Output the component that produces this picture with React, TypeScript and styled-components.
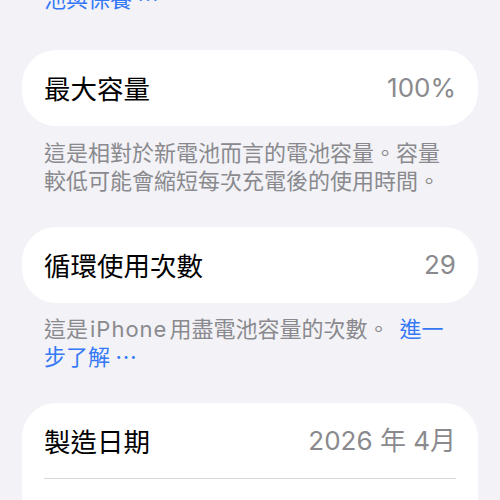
import React from "react";
import styled, { createGlobalStyle } from "styled-components";

const GlobalStyle = createGlobalStyle`
  html, body {
    margin: 0;
    padding: 0;
    background: #f2f2f7;
    overflow: hidden;
  }
  * { box-sizing: border-box; }
`;

const Page = styled.div`
  width: 500px;
  height: 500px;
  overflow: hidden;
  padding: 0 22px;
  background: #f2f2f7;
  font-family: Inter, "Noto Sans CJK TC", sans-serif;
  -webkit-font-smoothing: antialiased;
`;

const Footnote = styled.div<{ $top?: number }>`
  padding: ${(p) => p.$top ?? 13}px 22px 0;
  margin-bottom: 32px;
  font-family: Inter, "Noto Sans CJK TC", sans-serif;
  font-size: 22px;
  line-height: 28px;
  color: #8a8a8e;
  white-space: nowrap;
`;

const LeadNote = styled(Footnote)`
  padding-top: 0;
  margin-top: -15px;
  margin-bottom: 37px;
`;

const Link = styled.span`
  color: #3478f6;
`;

const Ellipsis = styled.span`
  font-family: "Noto Sans CJK TC", sans-serif;
  line-height: 1;
  margin-left: 5px;
`;

const Latin = styled.span`
  letter-spacing: 1px;
  margin: 0 2px;
`;

const Gap = styled.span`
  display: inline-block;
  width: 10px;
`;

const Card = styled.div`
  background: #ffffff;
  border-radius: 34px;
  overflow: hidden;
`;

const Row = styled.div`
  height: 76px;
  padding: 0 22px;
  display: flex;
  align-items: center;
  justify-content: space-between;
`;

const Title = styled.span`
  font-family: "Noto Sans CJK TC", sans-serif;
  font-size: 26.5px;
  color: #000000;
  line-height: 1;
`;

const Value = styled.span`
  font-family: Inter, "Noto Sans CJK TC", sans-serif;
  font-size: 26px;
  color: #8a8a8e;
  line-height: 1;
`;

const Separator = styled.div`
  height: 1px;
  margin: -1px 22px 0;
  background: #d8d8dc;
`;

export default function App() {
  return (
    <>
      <GlobalStyle />
      <Page>
        <LeadNote>
          <Link>
            池與保養<Ellipsis>⋯</Ellipsis>
          </Link>
        </LeadNote>

        <Card>
          <Row>
            <Title>最大容量</Title>
            <Value>100%</Value>
          </Row>
        </Card>
        <Footnote>
          這是相對於新電池而言的電池容量。容量
          <br />
          較低可能會縮短每次充電後的使用時間。
        </Footnote>

        <Card>
          <Row>
            <Title>循環使用次數</Title>
            <Value>29</Value>
          </Row>
        </Card>
        <Footnote $top={12}>
          這是<Latin>iPhone</Latin>用盡電池容量的次數。<Gap />
          <Link>進一</Link>
          <br />
          <Link>
            步了解<Ellipsis>⋯</Ellipsis>
          </Link>
        </Footnote>

        <Card>
          <Row>
            <Title>製造日期</Title>
            <Value>2026 年 4月</Value>
          </Row>
          <Separator />
          <Row />
        </Card>
      </Page>
    </>
  );
}
